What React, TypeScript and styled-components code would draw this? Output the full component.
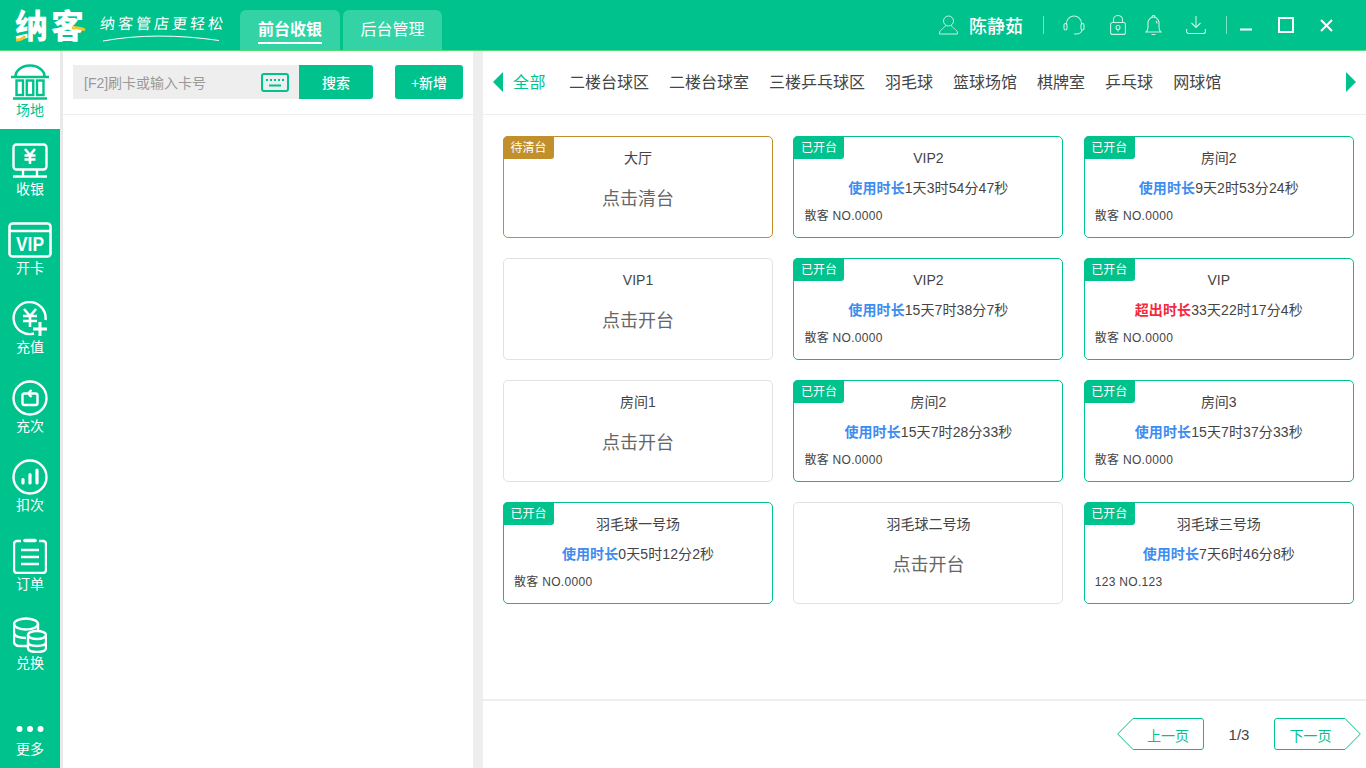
import React from "react";
import styled, { createGlobalStyle } from "styled-components";

const GREEN = "#00c28c";
const FONT = `"Liberation Sans", "Noto Sans CJK SC", sans-serif`;

const GlobalStyle = createGlobalStyle`
    html, body {
        margin: 0;
        padding: 0;
        height: 100%;
        overflow: hidden;
        background: #fff;
        font-family: ${FONT};
    }
    * { box-sizing: border-box; }
`;

type CardData = {
    name: string;
    state: "open" | "idle" | "clean";
    label?: string;
    time?: string;
    over?: boolean;
    member?: string;
};

const cards: CardData[] = [
    { name: "大厅", state: "clean" },
    { name: "VIP2", state: "open", time: "1天3时54分47秒" },
    { name: "房间2", state: "open", time: "9天2时53分24秒" },
    { name: "VIP1", state: "idle" },
    { name: "VIP2", state: "open", time: "15天7时38分7秒" },
    { name: "VIP", state: "open", time: "33天22时17分4秒", over: true },
    { name: "房间1", state: "idle" },
    { name: "房间2", state: "open", time: "15天7时28分33秒" },
    { name: "房间3", state: "open", time: "15天7时37分33秒" },
    { name: "羽毛球一号场", state: "open", time: "0天5时12分2秒" },
    { name: "羽毛球二号场", state: "idle" },
    { name: "羽毛球三号场", state: "open", time: "7天6时46分8秒", member: "123 NO.123" },
];

const tabs = ["二楼台球区", "二楼台球室", "三楼乒乓球区", "羽毛球", "篮球场馆", "棋牌室", "乒乓球", "网球馆"];

const IconSvg = styled.svg.attrs({ fill: "none", stroke: "currentColor" })`
    display: block;
`;

const VenueIcon = () => (
    <IconSvg width="40" height="36" viewBox="0 0 40 36" strokeWidth="2.6">
        <path d="M5.500 12.500a14.500 11 0 0 1 29 0" />
        <path d="M1 13h38M3 34.500h34" />
        <rect x="6.500" y="16.500" width="6.500" height="14.500" strokeWidth="2.400" />
        <rect x="16.750" y="16.500" width="6.500" height="14.500" strokeWidth="2.400" />
        <rect x="27" y="16.500" width="6.500" height="14.500" strokeWidth="2.400" />
    </IconSvg>
);

const CashIcon = () => (
    <IconSvg width="36" height="36" viewBox="0 0 36 36" strokeWidth="2.4">
        <rect x="1.500" y="1.500" width="33" height="25" rx="3" />
        <path d="M1 33.500h34M11 27v6M25 27v6" />
        <path d="M13 6l5 6 5-6M12.500 12.500h11M12.500 16.500h11M18 12v9" strokeWidth="2.600" />
    </IconSvg>
);

const VipIcon = () => (
    <IconSvg width="44" height="36" viewBox="0 0 44 36" strokeWidth="2.6">
        <rect x="1.500" y="1.500" width="41" height="33" rx="3" />
        <path d="M1.500 9h41" />
        <VipMark x="8" y="29" textLength="28" lengthAdjust="spacingAndGlyphs">VIP</VipMark>
    </IconSvg>
);

const RechargeIcon = () => (
    <IconSvg width="36" height="36" viewBox="0 0 36 36" strokeWidth="2.4">
        <path d="M22 32.500A16 16 0 1 1 33.500 19" />
        <path d="M12 8l6 7 6-7M11 15h14M11 20h14M18 15v11" strokeWidth="2.600" />
        <path d="M28 21v14M21 28h14" strokeWidth="3" />
    </IconSvg>
);

const TimesIcon = () => (
    <IconSvg width="36" height="36" viewBox="0 0 36 36" strokeWidth="2.4">
        <circle cx="18" cy="18" r="16.500" />
        <path d="M15 13.500h-2.500a2 2 0 0 0-2 2V23a2 2 0 0 0 2 2h11a2 2 0 0 0 2-2v-7.500a2 2 0 0 0-2-2H17" />
        <path d="M19.500 10L16 13.500l3.500 3.500" />
    </IconSvg>
);

const DeductIcon = () => (
    <IconSvg width="36" height="36" viewBox="0 0 36 36" strokeWidth="2.4">
        <circle cx="18" cy="18" r="16.500" />
        <path d="M11 20.500v3.500M18 15.500v8.500M25 11v13" strokeWidth="3.200" strokeLinecap="round" />
    </IconSvg>
);

const OrderIcon = () => (
    <IconSvg width="34" height="36" viewBox="0 0 34 36" strokeWidth="2.4">
        <path d="M8 3H4a3 3 0 0 0-3 3v26a3 3 0 0 0 3 3h26a3 3 0 0 0 3-3V6a3 3 0 0 0-3-3h-4" />
        <path d="M12 2.500h10" strokeWidth="3.600" strokeLinecap="round" />
        <path d="M8 12h18M8 19h18M8 26h18" />
    </IconSvg>
);

const ExchangeIcon = () => (
    <IconSvg width="34" height="36" viewBox="0 0 34 36" strokeWidth="2.4">
        <path d="M14 29H6c-2.500 0-5-2-5-4V7" />
        <ellipse cx="13" cy="7" rx="12" ry="5.500" />
        <path d="M25 7v7M1 16c0 3 5 5 12 5" />
        <ellipse cx="24" cy="18" rx="9" ry="4" />
        <path d="M15 18v13c0 2.500 4 4 9 4s9-1.500 9-4V18M15 25c0 2.500 4 4 9 4s9-1.500 9-4" />
    </IconSvg>
);

const MoreIcon = () => (
    <svg width="28" height="8" viewBox="0 0 28 8" fill="currentColor" style={{ display: "block" }}>
        <circle cx="3.500" cy="4" r="3" />
        <circle cx="14" cy="4" r="3" />
        <circle cx="24.500" cy="4" r="3" />
    </svg>
);

const sideItems = [
    { label: "收银", icon: <CashIcon /> },
    { label: "开卡", icon: <VipIcon /> },
    { label: "充值", icon: <RechargeIcon /> },
    { label: "充次", icon: <TimesIcon /> },
    { label: "扣次", icon: <DeductIcon /> },
    { label: "订单", icon: <OrderIcon /> },
    { label: "兑换", icon: <ExchangeIcon /> },
];

const App = () => {
    return (
        <Page>
            <GlobalStyle />
            <Header>
                <Logo>
                    <LogoText>纳客</LogoText>
                    <LogoAccent width="72" height="32" viewBox="0 0 72 32">
                        <path d="M1 29c3 0 7-1 9-4" stroke="#f6c624" strokeWidth="3" fill="none" />
                        <path d="M57 17c5-1 9 0 13 2" stroke="#f6c624" strokeWidth="3" fill="none" />
                    </LogoAccent>
                </Logo>
                <Slogan>
                    <SloganText>纳客管店更轻松</SloganText>
                    <svg width="118" height="7" viewBox="0 0 118 7" style={{ display: "block" }}>
                        <path d="M0 6C35 -.5 75 -.5 116 5.500" stroke="#fff" strokeWidth="1" fill="none" />
                    </svg>
                </Slogan>
                <NavTabs>
                    <NavTab $active><span>前台收银</span></NavTab>
                    <NavTab><span>后台管理</span></NavTab>
                </NavTabs>
                <HeaderRight>
                    <HeaderIcon $w={19} $mr={11}>
                        <IconSvg width="19" height="20" viewBox="0 0 19 20" strokeWidth="1">
                            <circle cx="9.500" cy="6" r="5" />
                            <path d="M6.500 10.500c0 2-6 4-6 7.500v1h18v-1c0-3.500-6-5.500-6-7.500" />
                        </IconSvg>
                    </HeaderIcon>
                    <UserName>陈静茹</UserName>
                    <HeaderDivider $ml={20} $mr={19} />
                    <HeaderIcon $w={22} $mr={25}>
                        <IconSvg width="22" height="20" viewBox="0 0 22 20" strokeWidth="1.100">
                            <path d="M3.500 10V8.500a7.500 7.500 0 0 1 15 0V10" />
                            <rect x="1" y="8.500" width="3" height="6.500" rx="1.500" />
                            <rect x="18" y="8.500" width="3" height="6.500" rx="1.500" />
                            <path d="M19 15c-.5 2.500-3 4-6 4h-2" />
                        </IconSvg>
                    </HeaderIcon>
                    <HeaderIcon $w={16} $mr={19}>
                        <IconSvg width="16" height="20" viewBox="0 0 16 20" strokeWidth="1.100">
                            <rect x="0.600" y="7.500" width="14.800" height="11.900" rx="2" />
                            <path d="M3.500 7.500V4.500a4.500 4 0 0 1 9 0v3" />
                            <circle cx="8" cy="12.500" r="2" />
                            <path d="M8 14.500v2" />
                        </IconSvg>
                    </HeaderIcon>
                    <HeaderIcon $w={17} $mr={24}>
                        <IconSvg width="17" height="21" viewBox="0 0 17 21" strokeWidth="1.100">
                            <path d="M1 17c1.500-1 2-3 2-6V8a5.500 6 0 0 1 11 0v3c0 3 .5 5 2 6z" />
                            <path d="M7 2a1.500 1.500 0 0 1 3 0M6.500 19.500h4M11 6c.8.800 1 1.500 1 2.500" />
                        </IconSvg>
                    </HeaderIcon>
                    <HeaderIcon $w={20} $mr={0}>
                        <IconSvg width="20" height="20" viewBox="0 0 20 20" strokeWidth="1.100">
                            <path d="M10 1v11M5.500 8l4.500 4.500L14.500 8" />
                            <path d="M.6 14v2.500a2 2 0 0 0 2 2h14.800a2 2 0 0 0 2-2V14" />
                        </IconSvg>
                    </HeaderIcon>
                    <HeaderDivider $ml={20} $mr={13} />
                    <WindowButton $w={13} $mr={25}>
                        <svg width="13" height="13" viewBox="0 0 13 13"><path d="M0 10.500h12" stroke="#fff" strokeWidth="2" /></svg>
                    </WindowButton>
                    <WindowButton $w={16} $mr={26}>
                        <svg width="16" height="16" viewBox="0 0 16 16" fill="none"><rect x="1" y="1" width="14" height="14" stroke="#fff" strokeWidth="2" /></svg>
                    </WindowButton>
                    <WindowButton $w={13} $mr={33}>
                        <svg width="13" height="13" viewBox="0 0 13 13"><path d="M1 1l11 11M12 1L1 12" stroke="#fff" strokeWidth="2" /></svg>
                    </WindowButton>
                </HeaderRight>
            </Header>
            <Body>
                <Sidebar>
                    <ActiveSideItem>
                        <SideIcon><VenueIcon /></SideIcon>
                        <SideLabel>场地</SideLabel>
                    </ActiveSideItem>
                    {sideItems.map((item) => (
                        <SideItem key={item.label}>
                            <SideIcon>{item.icon}</SideIcon>
                            <SideLabel>{item.label}</SideLabel>
                        </SideItem>
                    ))}
                    <MoreItem>
                        <MoreIcon />
                        <MoreLabel>更多</MoreLabel>
                    </MoreItem>
                </Sidebar>
                <LeftPanel>
                    <SearchBar>
                        <SearchBox>
                            <Placeholder>[F2]刷卡或输入卡号</Placeholder>
                            <KeyboardIcon width="28" height="19" viewBox="0 0 28 19" strokeWidth="2">
                                <rect x="1" y="1" width="26" height="17" rx="2" />
                                <path d="M5 7h2M9 7h2M13 7h2M17 7h2M21 7h2M8 12.500h12" strokeWidth="2" />
                            </KeyboardIcon>
                        </SearchBox>
                        <SearchButton>搜索</SearchButton>
                        <AddButton>+新增</AddButton>
                    </SearchBar>
                </LeftPanel>
                <MainPanel>
                    <TabBar>
                        <ArrowLeft />
                        <ActiveTab>全部</ActiveTab>
                        <TabList>
                            {tabs.map((t) => (
                                <TabItem key={t}>{t}</TabItem>
                            ))}
                        </TabList>
                        <ArrowRight />
                    </TabBar>
                    <CardGrid>
                        {cards.map((c, i) => (
                            <Card key={i} $state={c.state}>
                                {c.state !== "idle" && (
                                    <Badge $state={c.state}>{c.state === "clean" ? "待清台" : "已开台"}</Badge>
                                )}
                                <CardTitle>{c.name}</CardTitle>
                                {c.state === "open" ? (
                                    <>
                                        <UsedLine>
                                            <UsedLabel $over={c.over}>{c.over ? "超出时长" : "使用时长"}</UsedLabel>
                                            {c.time}
                                        </UsedLine>
                                        <MemberLine>{c.member || "散客 NO.0000"}</MemberLine>
                                    </>
                                ) : (
                                    <CardAction>{c.state === "clean" ? "点击清台" : "点击开台"}</CardAction>
                                )}
                            </Card>
                        ))}
                    </CardGrid>
                    <Pager>
                        <PageButton $dir="prev">
                            <PageShape width="87" height="32" viewBox="0 0 87 32">
                                <path d="M16 .5H84a2.500 2.500 0 0 1 2.500 2.500v26a2.500 2.500 0 0 1-2.500 2.500H16L.7 16z" />
                            </PageShape>
                            <PageText>上一页</PageText>
                        </PageButton>
                        <PageCount>1/3</PageCount>
                        <PageButton $dir="next">
                            <PageShape width="87" height="32" viewBox="0 0 87 32">
                                <path d="M71 .5H3A2.500 2.500 0 0 0 .5 3v26A2.500 2.500 0 0 0 3 31.500h68L86.300 16z" />
                            </PageShape>
                            <PageText>下一页</PageText>
                        </PageButton>
                    </Pager>
                </MainPanel>
            </Body>
        </Page>
    );
};

const Page = styled.div`
    width: 1366px;
    height: 768px;
    display: flex;
    flex-direction: column;
    overflow: hidden;
`;

const Header = styled.div`
    height: 51px;
    flex: none;
    display: flex;
    align-items: flex-start;
    background: ${GREEN};
    border-bottom: 1px solid #4fdc7f;
    color: #fff;
`;

const Logo = styled.div`
    position: relative;
    width: 72px;
    height: 32px;
    margin: 11px 0 0 15px;
`;

const LogoText = styled.div`
    font-size: 33px;
    font-weight: 900;
    line-height: 32px;
    letter-spacing: 3px;
    white-space: nowrap;
`;

const LogoAccent = styled.svg`
    position: absolute;
    left: 0;
    top: 0;
`;

const Slogan = styled.div`
    margin: 13px 0 0 13px;
    width: 128px;
    padding-left: 3px;
`;

const SloganText = styled.div`
    font-size: 15px;
    font-weight: 400;
    line-height: 22px;
    letter-spacing: 3px;
    white-space: nowrap;
    transform: skewX(-6deg);
    margin-left: -3px;
`;

const NavTabs = styled.div`
    display: flex;
    gap: 3px;
    margin: 10px 0 0 12px;
`;

const NavTab = styled.div<{ $active?: boolean }>`
    width: ${(p) => (p.$active ? 100 : 99)}px;
    height: 40px;
    background: #33d3a5;
    border-radius: 6px 6px 0 0;
    display: flex;
    justify-content: center;
    padding-top: 9px;
    font-size: 16px;
    font-weight: ${(p) => (p.$active ? 700 : 400)};

    span {
        height: 25px;
        line-height: 22px;
        border-bottom: ${(p) => (p.$active ? "2px solid #fff" : "none")};
    }
`;

const HeaderRight = styled.div`
    margin-left: auto;
    display: flex;
    align-items: center;
    height: 50px;
`;

const HeaderIcon = styled.div<{ $w: number; $mr: number }>`
    width: ${(p) => p.$w}px;
    margin-right: ${(p) => p.$mr}px;
    color: #c6f2e3;
`;

const UserName = styled.div`
    font-size: 18px;
    font-weight: 500;
    white-space: nowrap;
`;

const HeaderDivider = styled.div<{ $ml: number; $mr: number }>`
    width: 1px;
    height: 18px;
    background: #7fe0c5;
    margin: 0 ${(p) => p.$mr}px 0 ${(p) => p.$ml}px;
`;

const WindowButton = styled.div<{ $w: number; $mr: number }>`
    width: ${(p) => p.$w}px;
    margin-right: ${(p) => p.$mr}px;
    display: flex;
    svg { display: block; }
`;

const Body = styled.div`
    flex: 1;
    min-height: 0;
    display: flex;
`;

const Sidebar = styled.div`
    width: 63px;
    flex: none;
    background: ${GREEN};
    border-right: 3px solid #e9e9e9;
    display: flex;
    flex-direction: column;
    color: #fff;
`;

const SideItem = styled.div`
    height: 79px;
    flex: none;
    display: flex;
    flex-direction: column;
    align-items: center;
    padding-top: 12px;
`;

const ActiveSideItem = styled(SideItem)`
    height: 78px;
    background: #fff;
    color: ${GREEN};
    padding-top: 11px;
`;

const MoreItem = styled(SideItem)`
    margin-top: auto;
    height: 50px;
    padding-top: 7px;
`;

const SideIcon = styled.div`
    height: 39px;
    display: flex;
    align-items: center;
    justify-content: center;
`;

const SideLabel = styled.div`
    font-size: 14px;
    line-height: 20px;
    margin-top: -1px;
`;

const MoreLabel = styled(SideLabel)`
    margin-top: 6px;
`;

const VipMark = styled.text`
    font-family: ${FONT};
    font-size: 20px;
    font-weight: 700;
    fill: currentColor;
    stroke: none;
`;

const KeyboardIcon = styled(IconSvg)`
    color: ${GREEN};
`;

const LeftPanel = styled.div`
    width: 410px;
    flex: none;
    background: #fff;
`;

const SearchBar = styled.div`
    height: 64px;
    border-bottom: 1px solid #eee;
    padding: 14px 10px 0;
    display: flex;
    align-items: flex-start;
`;

const SearchBox = styled.div`
    width: 226px;
    height: 34px;
    background: #eee;
    display: flex;
    align-items: center;
    justify-content: space-between;
    padding: 0 10px 0 11px;
`;

const Placeholder = styled.span`
    font-size: 14px;
    color: #999;
    white-space: nowrap;
`;

const SearchButton = styled.div`
    width: 74px;
    height: 34px;
    background: ${GREEN};
    color: #fff;
    font-size: 14px;
    font-weight: 500;
    border-radius: 0 3px 3px 0;
    display: flex;
    align-items: center;
    justify-content: center;
`;

const AddButton = styled(SearchButton)`
    width: 68px;
    margin-left: 22px;
    border-radius: 3px;
`;

const MainPanel = styled.div`
    flex: 1;
    min-width: 0;
    border-left: 10px solid #eee;
    display: flex;
    flex-direction: column;
    background: #fff;
`;

const TabBar = styled.div`
    height: 64px;
    flex: none;
    border-bottom: 1px solid #eee;
    display: flex;
    align-items: center;
    padding: 0 10px;
`;

const ArrowLeft = styled.div`
    width: 0;
    height: 0;
    margin-bottom: 1px;
    border-style: solid;
    border-width: 10px 10px 10px 0;
    border-color: transparent ${GREEN} transparent transparent;
`;

const ArrowRight = styled(ArrowLeft)`
    margin-left: auto;
    border-width: 10px 0 10px 10px;
    border-color: transparent transparent transparent ${GREEN};
`;

const ActiveTab = styled.div`
    font-size: 16px;
    color: ${GREEN};
    margin: 0 0 4px 10px;
    white-space: nowrap;
    letter-spacing: .5px;
`;

const TabList = styled.div`
    display: flex;
    gap: 20px;
    margin: 0 0 4px 23px;
`;

const TabItem = styled.div`
    font-size: 16px;
    color: #444;
    white-space: nowrap;
`;

const CardGrid = styled.div`
    flex: 1;
    padding: 21px 0 0 20px;
    display: grid;
    grid-template-columns: repeat(3, 270px);
    grid-auto-rows: 102px;
    column-gap: 20.4px;
    row-gap: 20px;
    align-content: start;
`;

const stateColor = { open: GREEN, clean: "#c18f2c", idle: "#e2e2e2" };

const Card = styled.div<{ $state: CardData["state"] }>`
    position: relative;
    border: 1px solid ${(p) => stateColor[p.$state]};
    border-radius: 5px;
    background: #fff;
    display: flex;
    flex-direction: column;
    align-items: center;
    padding-top: 10px;
`;

const Badge = styled.div<{ $state: CardData["state"] }>`
    position: absolute;
    left: -1px;
    top: -1px;
    width: 51px;
    height: 23px;
    background: ${(p) => stateColor[p.$state]};
    color: #fff;
    font-size: 12px;
    line-height: 25px;
    text-align: center;
    border-radius: 5px 0 3px 0;
`;

const CardTitle = styled.div`
    font-size: 14px;
    line-height: 22px;
    color: #444;
`;

const CardAction = styled.div`
    font-size: 18px;
    line-height: 26px;
    margin-top: 17px;
    color: #666;
`;

const UsedLine = styled.div`
    font-size: 14px;
    line-height: 20px;
    margin-top: 9px;
    letter-spacing: .1px;
    color: #444;
`;

const UsedLabel = styled.span<{ $over?: boolean }>`
    color: ${(p) => (p.$over ? "#f5283c" : "#3f8cf0")};
    font-weight: 700;
`;

const MemberLine = styled.div`
    align-self: flex-start;
    margin: 8px 0 0 10px;
    font-size: 12px;
    line-height: 20px;
    letter-spacing: .3px;
    color: #444;
`;

const Pager = styled.div`
    height: 69px;
    flex: none;
    border-top: 2px solid #eee;
    display: flex;
    align-items: center;
    justify-content: flex-end;
    padding: 0 5px 1px 0;
`;

const PageButton = styled.div<{ $dir: "prev" | "next" }>`
    position: relative;
    width: 87px;
    height: 32px;
    display: flex;
    align-items: center;
    justify-content: center;
    padding: ${(p) => (p.$dir === "prev" ? "1px 0 0 15px" : "1px 14px 0 0")};
`;

const PageShape = styled.svg`
    position: absolute;
    left: 0;
    top: 0;
    fill: #fff;
    stroke: ${GREEN};
    stroke-width: 1;
`;

const PageText = styled.span`
    position: relative;
    font-size: 14px;
    color: ${GREEN};
    white-space: nowrap;
`;

const PageCount = styled.div`
    width: 70px;
    text-align: center;
    font-size: 15px;
    color: #444;
`;

export default App;
